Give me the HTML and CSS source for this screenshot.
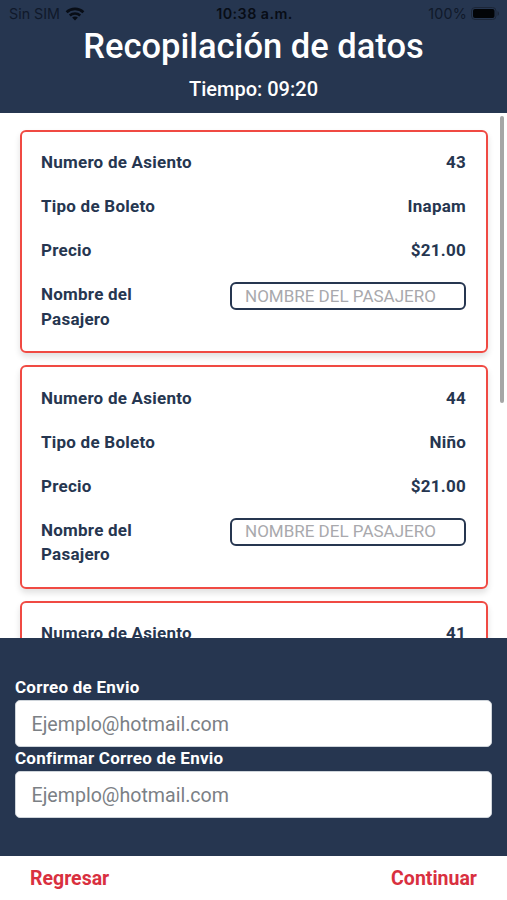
FILE: index.html
```
<!DOCTYPE html>
<html lang="es">
<head>
  <meta charset="UTF-8">
  <meta name="viewport" content="width=device-width, initial-scale=1.0">
  <title>Recopilación de datos</title>
  <link rel="stylesheet" href="styles.css">
</head>
<body>
<header class="page-header">
  <div class="status-bar">
    <div class="status-carrier">
      <span class="carrier-name">Sin SIM</span>
      <svg class="wifi-icon" viewBox="0 0 20 14" width="20" height="14">
        <path d="M1.6 5.2C6.2.8 13.8.8 18.4 5.2" fill="none" stroke="currentColor" stroke-width="2.7"/>
        <path d="M4.8 8.5c2.9-2.8 7.5-2.8 10.4 0" fill="none" stroke="currentColor" stroke-width="2.5"/>
        <path d="M10 13.5 7.1 10.5c1.6-1.5 4.2-1.5 5.8 0z" fill="currentColor"/>
      </svg>
    </div>
    <span class="status-time">10:38 a.m.</span>
    <div class="status-battery">
      <span class="battery-level">100%</span>
      <svg class="battery-icon" viewBox="0 0 29 13" width="29" height="13">
        <rect x=".5" y=".5" width="24.5" height="12" rx="3.5" fill="none" stroke="#1c2638"/>
        <rect x="2" y="2" width="21.5" height="9" rx="2" fill="#020407"/>
        <path d="M26.5 4.2c2 .6 2 4 0 4.6z" fill="#1c2638"/>
      </svg>
    </div>
  </div>
  <h1>Recopilación de datos</h1>
  <p class="timer">Tiempo: 09:20</p>
</header>

<main class="ticket-list">
  <div class="ticket-card">
    <div class="ticket-row"><span>Numero de Asiento</span><span>43</span></div>
    <div class="ticket-row"><span>Tipo de Boleto</span><span>Inapam</span></div>
    <div class="ticket-row"><span>Precio</span><span>$21.00</span></div>
    <div class="ticket-row">
      <label class="name-label" for="pasajero-43">Nombre del Pasajero</label>
      <input class="name-input" id="pasajero-43" type="text" placeholder="NOMBRE DEL PASAJERO">
    </div>
  </div>
  <div class="ticket-card">
    <div class="ticket-row"><span>Numero de Asiento</span><span>44</span></div>
    <div class="ticket-row"><span>Tipo de Boleto</span><span>Niño</span></div>
    <div class="ticket-row"><span>Precio</span><span>$21.00</span></div>
    <div class="ticket-row">
      <label class="name-label" for="pasajero-44">Nombre del Pasajero</label>
      <input class="name-input" id="pasajero-44" type="text" placeholder="NOMBRE DEL PASAJERO">
    </div>
  </div>
  <div class="ticket-card">
    <div class="ticket-row"><span>Numero de Asiento</span><span>41</span></div>
  </div>
  <div class="scroll-thumb"></div>
</main>

<section class="email-section">
  <label for="correo">Correo de Envio</label>
  <input class="email-input" id="correo" type="email" placeholder="Ejemplo@hotmail.com">
  <label for="confirmar">Confirmar Correo de Envio</label>
  <input class="email-input" id="confirmar" type="email" placeholder="Ejemplo@hotmail.com">
</section>

<footer class="page-footer">
  <button class="nav-button" type="button">Regresar</button>
  <button class="nav-button" type="button">Continuar</button>
</footer>
</body>
</html>
```
FILE: styles.css
```
:root {
  --primary-color: #263650;
  --accent-color: #f04a43;
  --action-color: #d9303f;
}

* {
  box-sizing: border-box;
  margin: 0;
  padding: 0;
}

body {
  font-family: Roboto, sans-serif;
  background: #fff;
  color: var(--primary-color);
  height: 100vh;
  display: flex;
  flex-direction: column;
  overflow: hidden;
}

.page-header {
  height: 113px;
  flex-shrink: 0;
  background: var(--primary-color);
  color: #fff;
  text-align: center;
}

.status-bar {
  display: grid;
  grid-template-columns: 1fr auto 1fr;
  align-items: center;
  height: 26px;
  padding: 1px 7px 0 9px;
  font-family: Inter, sans-serif;
  font-size: 14.3px;
  color: #080d16;
}

.status-carrier,
.status-battery {
  display: flex;
  align-items: center;
  gap: 5px;
}

.status-battery {
  justify-content: flex-end;
  gap: 4px;
}

.carrier-name,
.battery-level {
  color: #10192a;
}

.battery-level {
  letter-spacing: 0.2px;
}

.status-time {
  font-weight: 600;
  letter-spacing: 0.45px;
}

.page-header h1 {
  font-size: 34.5px;
  font-weight: 500;
  line-height: 40px;
}

.timer {
  font-size: 20px;
  font-weight: 500;
  line-height: 24px;
  margin-top: 11px;
}

.ticket-list {
  position: relative;
  flex: 1;
  min-height: 0;
  overflow: hidden;
  padding: 16.5px 19px 0 20px;
}

.ticket-card {
  height: 223.5px;
  margin-bottom: 12px;
  padding: 18.5px 20px 0 19px;
  border: 2px solid var(--accent-color);
  border-radius: 6px;
  box-shadow: 0 4px 6px rgba(0, 0, 0, 0.12);
  font-size: 17px;
  font-weight: 700;
  line-height: 24.5px;
  letter-spacing: 0.24px;
}

.ticket-row {
  display: flex;
  justify-content: space-between;
  align-items: flex-start;
  margin-bottom: 19.5px;
}

.name-label {
  width: 120px;
}

.name-input {
  width: 236px;
  height: 28px;
  padding: 0 13px 1px;
  border: 2px solid var(--primary-color);
  border-radius: 6px;
  font-family: inherit;
  font-size: 17px;
}

.name-input::placeholder {
  color: #a9a9ad;
}

.scroll-thumb {
  position: absolute;
  top: 3px;
  right: 3px;
  width: 4px;
  height: 287px;
  border-radius: 2px;
  background: #a6a6a6;
}

.email-section {
  height: 218px;
  flex-shrink: 0;
  padding: 38px 15px 0;
  background: var(--primary-color);
  color: #fff;
}

.email-section label {
  display: block;
  height: 24px;
  font-size: 17px;
  font-weight: 700;
  line-height: 22px;
  letter-spacing: 0.25px;
}

.email-input {
  display: block;
  width: 100%;
  height: 47px;
  padding: 2px 15.5px 0;
  border: 1px solid #ced4da;
  border-radius: 5px;
  background: #fff;
  font-family: inherit;
  font-size: 19.6px;
}

.email-input::placeholder {
  color: #7b8085;
}

.page-footer {
  display: flex;
  justify-content: space-between;
  align-items: center;
  height: 44px;
  flex-shrink: 0;
  padding: 0 30px;
}

.nav-button {
  border: none;
  background: none;
  color: var(--action-color);
  font-family: inherit;
  font-size: 19.5px;
  font-weight: 700;
}
```
